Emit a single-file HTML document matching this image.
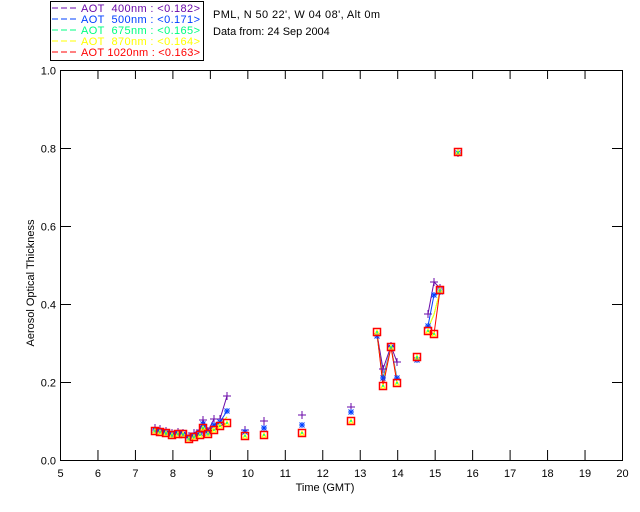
<!DOCTYPE html>
<html><head><meta charset="utf-8"><style>
html,body{margin:0;padding:0;background:#fff;width:640px;height:512px;overflow:hidden}
svg{display:block}
text{font-family:"Liberation Sans","DejaVu Sans",sans-serif;font-size:11px}
</style></head><body>
<svg id="s" width="640" height="512" viewBox="0 0 640 512" xmlns="http://www.w3.org/2000/svg">
<rect width="640" height="512" fill="#fff"/>
<rect x="50.5" y="1.5" width="153" height="59" fill="none" stroke="#000" stroke-width="1"/>
<g font-size="11">
<line x1="52" y1="8" x2="76" y2="8" stroke="#6a0aa8" stroke-dasharray="6,3"/>
<text x="81" y="12" fill="#6a0aa8" xml:space="preserve" textLength="119">AOT  400nm : &lt;0.182&gt;</text>
<line x1="52" y1="19" x2="76" y2="19" stroke="#0040ff" stroke-dasharray="6,3"/>
<text x="81" y="23" fill="#0040ff" xml:space="preserve" textLength="119">AOT  500nm : &lt;0.171&gt;</text>
<line x1="52" y1="30" x2="76" y2="30" stroke="#00ff80" stroke-dasharray="6,3"/>
<text x="81" y="34" fill="#00ff80" xml:space="preserve" textLength="119">AOT  675nm : &lt;0.165&gt;</text>
<line x1="52" y1="41" x2="76" y2="41" stroke="#ffff00" stroke-dasharray="6,3"/>
<text x="81" y="45" fill="#ffff00" xml:space="preserve" textLength="119">AOT  870nm : &lt;0.164&gt;</text>
<line x1="52" y1="52" x2="76" y2="52" stroke="#ff0000" stroke-dasharray="6,3"/>
<text x="81" y="56" fill="#ff0000" xml:space="preserve" textLength="119">AOT 1020nm : &lt;0.163&gt;</text>
</g>
<text x="213" y="18" fill="#000" textLength="167">PML, N 50 22', W 04 08', Alt 0m</text>
<text x="213" y="35" fill="#000">Data from: 24 Sep 2004</text>
<rect x="60.5" y="70.5" width="562" height="390" fill="none" stroke="#000" stroke-width="1"/>
<g id="ax" stroke="#000"></g>
<g id="lab" fill="#000" font-size="11"></g>
<text x="325" y="491" text-anchor="middle" fill="#000">Time (GMT)</text>
<text transform="translate(34,283) rotate(-90)" text-anchor="middle" fill="#000" font-size="10">Aerosol Optical Thickness</text>
<g id="d"></g>
</svg>
<script>
var ns="http://www.w3.org/2000/svg";
function el(p,t,a){var e=document.createElementNS(ns,t);for(var k in a)e.setAttribute(k,a[k]);p.appendChild(e);return e;}
var ax=document.getElementById('ax'),lab=document.getElementById('lab'),d=document.getElementById('d');
for(var i=5;i<=20;i++){var x=60.5+(i-5)*562/15;
 el(ax,'line',{x1:x,y1:460,x2:x,y2:450});el(ax,'line',{x1:x,y1:71,x2:x,y2:79});
 var t=el(lab,'text',{x:x,y:477,'text-anchor':'middle'});t.textContent=i;}
for(var j=0;j<=5;j++){var y=460.5-j*78;
 el(ax,'line',{x1:61,y1:y,x2:71,y2:y});el(ax,'line',{x1:622,y1:y,x2:612,y2:y});
 var t=el(lab,'text',{x:56,y:y+4,'text-anchor':'end'});t.textContent=(j*0.2).toFixed(1);}
var P=[[155,428,430,431],[160,429,431,432],[166,431,433,433],[172,433,435,435],[178,432,433,434],[183,433,434,434],[189,436,438,439],[194,433,436,437],[200,430,433,435],[203,420,424,428],[208,431,433,434],[214,419,425,430],[220,419,422,426],[227,396,411,423],[245,430,432,436],[264,421,428,435],[302,415,425,433],[351,407,412,421],[377,334,336,332],[383,369,378,386],[391,346,347,347],[397,362,378,383],[417,358,360,357],[428,314,326,331],[434,282,295,334],[440,288,292,290],[458,153,153,152]];
var groups=[[0,13],[18,21],[23,25]];
var cols=['#6a0aa8','#0040ff','#00ff80','#ffff00','#ff0000'];
groups.forEach(function(g){
 for(var c=0;c<5;c++){var pts=[];for(var k=g[0];k<=g[1];k++){var p=P[k];var y=c==0?p[1]:c==1?p[2]:c==4?p[3]:(p[2]+p[3])/2;pts.push(p[0]+','+y);}
  el(d,'polyline',{points:pts.join(' '),fill:'none',stroke:cols[c],'stroke-width':1});}
});
P.forEach(function(p){var x=p[0];
 var y=p[1];
 el(d,'path',{d:'M'+(x-4)+' '+y+'h8M'+x+' '+(y-4)+'v8',stroke:'#6a0aa8','stroke-width':1});
 y=p[2];
 el(d,'path',{d:'M'+(x-3)+' '+y+'h6M'+x+' '+(y-3)+'v6M'+(x-2.5)+' '+(y-2.5)+'l5 5M'+(x+2.5)+' '+(y-2.5)+'l-5 5',stroke:'#0040ff','stroke-width':1});
 el(d,'rect',{x:x-3.5,y:p[3]-3.5,width:7,height:7,fill:'none',stroke:'#ff0000','stroke-width':1.5});
 el(d,'path',{d:'M'+(x-2)+' '+(p[3]+2)+'L'+x+' '+(p[3]-2)+'L'+(x+2)+' '+(p[3]+2)+'Z',fill:'none',stroke:'#ffff00','stroke-width':1});
 el(d,'circle',{cx:x,cy:p[3],r:1,fill:'#00ff80'});
});
</script>
</body></html>
